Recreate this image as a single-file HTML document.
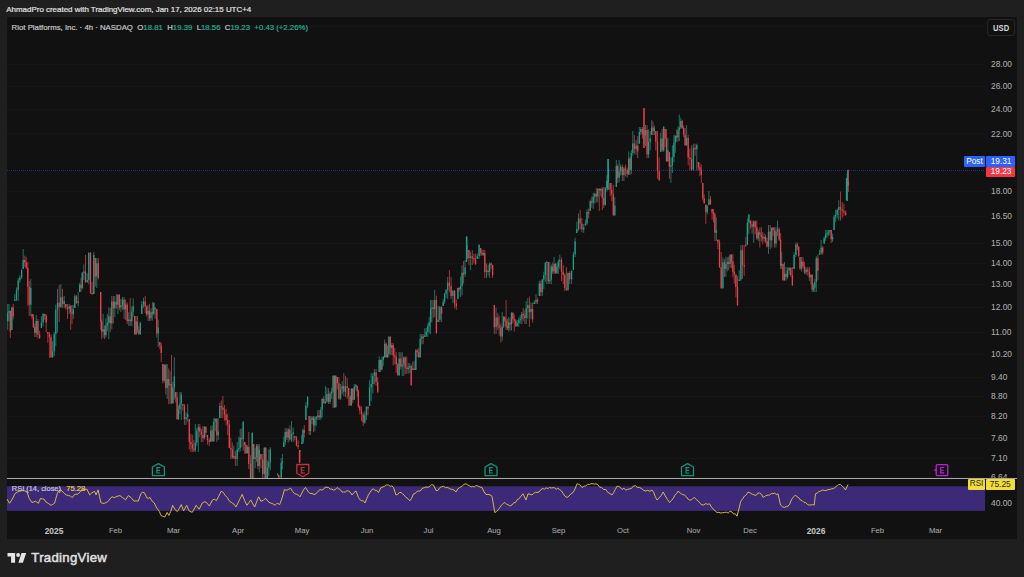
<!DOCTYPE html>
<html><head><meta charset="utf-8"><style>
*{margin:0;padding:0;box-sizing:border-box}
#top,#legend,#rsil{-webkit-text-stroke:0.2px currentColor}
.pl,.tl{-webkit-text-stroke:0.05px currentColor}
html,body{width:1024px;height:577px;overflow:hidden;background:#1f1f1f;font-family:"Liberation Sans",sans-serif}
#top{position:absolute;left:6.3px;top:5.3px;font-size:7.95px;color:#e2e2e2;white-space:nowrap;letter-spacing:0px}
#chart{position:absolute;left:7px;top:17px;width:1010px;height:522px;background:#111111}
svg{position:absolute;left:0;top:0}
#legend{position:absolute;left:11.6px;top:22.5px;font-size:7.8px;color:#c8c8c8;white-space:nowrap}
#legend .v{color:#22ab94}
.pl{position:absolute;left:991px;width:30px;text-align:left;font-size:8.4px;color:#adadad;line-height:12px}
.tl{position:absolute;top:525.3px;width:60px;text-align:center;font-size:7.7px;color:#acacac;line-height:12px}
.tl.b{font-weight:bold;color:#c4c4c4;font-size:8.4px}
.tag{position:absolute;height:10.5px;font-size:8.3px;line-height:10.5px;color:#fff;text-align:center;border-radius:1px}
#usd{position:absolute;left:987.3px;top:19.4px;width:27.7px;height:16.4px;border:1px solid #262626;border-radius:3px;font-size:7.6px;font-weight:bold;color:#d8d8d8;text-align:center;line-height:14.5px}
#usd span{display:inline-block;transform:scaleY(1.12);position:relative;top:1.3px}
#logo{position:absolute;left:31.3px;top:549.7px;font-size:13.2px;font-weight:normal;-webkit-text-stroke:0.55px #dedede;color:#dedede;letter-spacing:0.3px}
#rsil{position:absolute;left:11.8px;top:484px;font-size:7.45px;color:#c8c8d0;white-space:nowrap}
#rsil span{color:#e6d044;font-size:7.7px;margin-left:1px}
</style></head><body>
<div id="top">AhmadPro created with TradingView.com, Jan 17, 2026 02:15 UTC+4</div>
<div id="chart"></div>
<svg width="1024" height="577" viewBox="0 0 1024 577">
<path d="M7 26.5H985" stroke="#161616" stroke-width="1"/><path d="M7 64.5H985" stroke="#161616" stroke-width="1"/><path d="M7 86.5H985" stroke="#161616" stroke-width="1"/><path d="M7 109.5H985" stroke="#161616" stroke-width="1"/><path d="M7 133.5H985" stroke="#161616" stroke-width="1"/><path d="M7 191.5H985" stroke="#161616" stroke-width="1"/><path d="M7 216.5H985" stroke="#161616" stroke-width="1"/><path d="M7 243.5H985" stroke="#161616" stroke-width="1"/><path d="M7 263.5H985" stroke="#161616" stroke-width="1"/><path d="M7 284.5H985" stroke="#161616" stroke-width="1"/><path d="M7 307.5H985" stroke="#161616" stroke-width="1"/><path d="M7 332.5H985" stroke="#161616" stroke-width="1"/><path d="M7 354.5H985" stroke="#161616" stroke-width="1"/><path d="M7 377.5H985" stroke="#161616" stroke-width="1"/><path d="M7 396.5H985" stroke="#161616" stroke-width="1"/><path d="M7 416.5H985" stroke="#161616" stroke-width="1"/><path d="M7 438.5H985" stroke="#161616" stroke-width="1"/><path d="M7 458.5H985" stroke="#161616" stroke-width="1"/><path d="M7 477.5H985" stroke="#161616" stroke-width="1"/>
<rect x="7" y="486.3" width="978" height="24.6" fill="#3c2a78"/>
<path d="M7 170.5H985" stroke="#1f3378" stroke-width="1" stroke-dasharray="1 1"/>
<g stroke-width="1.3" fill="none"><path d="M7.7 304.0V329.9M9.0 304.0V321.3" stroke="#1f9e88" stroke-width="0.7"/><path d="M7.7 312.6V321.0M9.0 311.1V312.6" stroke="#1f9e88"/><path d="M10.3 310.6V338.0" stroke="#e8404c" stroke-width="0.7"/><path d="M10.3 311.1V331.4" stroke="#e8404c"/><path d="M11.8 306.7V330.0" stroke="#1f9e88" stroke-width="0.7"/><path d="M11.8 307.6V330.0" stroke="#1f9e88"/><path d="M13.2 304.0V319.3" stroke="#e8404c" stroke-width="0.7"/><path d="M13.2 307.6V316.3" stroke="#e8404c"/><path d="M14.8 293.8V301.0M16.5 287.5V301.0M18.2 278.0V301.0M19.9 275.2V283.0M21.6 269.0V278.8M23.2 249.0V269.0" stroke="#1f9e88" stroke-width="0.7"/><path d="M14.8 299.5V301.0M16.5 290.2V299.5M18.2 280.5V290.2M19.9 277.6V280.5M21.6 270.0V277.6M23.2 260.0V269.0" stroke="#1f9e88"/><path d="M24.8 255.6V266.8M26.2 256.8V269.0M27.8 262.0V305.9M29.2 280.8V316.0" stroke="#e8404c" stroke-width="0.7"/><path d="M24.8 260.0V262.4M26.2 262.4V268.0M27.8 268.0V287.0M29.2 287.0V304.8" stroke="#e8404c"/><path d="M30.8 278.8V316.0" stroke="#1f9e88" stroke-width="0.7"/><path d="M30.8 287.9V304.8" stroke="#1f9e88"/><path d="M32.1 314.0V319.4M33.4 314.0V328.0M34.8 323.8V337.0" stroke="#e8404c" stroke-width="0.7"/><path d="M32.1 314.0V316.9M33.4 316.9V327.0M34.8 327.0V332.9" stroke="#e8404c"/><path d="M36.2 315.0V337.0" stroke="#1f9e88" stroke-width="0.7"/><path d="M36.2 321.1V332.9" stroke="#1f9e88"/><path d="M37.9 319.0V338.5M39.6 330.6V339.0" stroke="#e8404c" stroke-width="0.7"/><path d="M37.9 321.1V334.7M39.6 334.7V337.8" stroke="#e8404c"/><path d="M41.4 316.4V328.0M43.1 313.0V326.4" stroke="#1f9e88" stroke-width="0.7"/><path d="M41.4 322.4V328.0M43.1 314.0V322.4" stroke="#1f9e88"/><path d="M44.8 314.0V319.9M46.2 314.2V332.0M47.8 332.0V342.8M49.4 332.0V358.0M51.0 334.5V358.0" stroke="#e8404c" stroke-width="0.7"/><path d="M44.8 314.0V315.8M46.2 315.8V322.6M47.8 332.0V333.7M49.4 333.7V337.3M51.0 337.3V357.0" stroke="#e8404c"/><path d="M52.6 341.2V358.0M54.2 332.0V356.2M55.8 304.7V346.0M57.5 288.9V332.7" stroke="#1f9e88" stroke-width="0.7"/><path d="M52.6 351.2V357.0M54.2 334.1V351.2M55.8 309.4V334.1M57.5 302.7V309.4" stroke="#1f9e88"/><path d="M59.2 285.0V322.0" stroke="#e8404c" stroke-width="0.7"/><path d="M59.2 302.7V307.0" stroke="#e8404c"/><path d="M60.8 284.0V308.0" stroke="#1f9e88" stroke-width="0.7"/><path d="M60.8 297.2V307.0" stroke="#1f9e88"/><path d="M62.5 288.8V308.0" stroke="#e8404c" stroke-width="0.7"/><path d="M62.5 297.2V304.0" stroke="#e8404c"/><path d="M64.2 295.8V308.0" stroke="#1f9e88" stroke-width="0.7"/><path d="M64.2 301.0V304.0" stroke="#1f9e88"/><path d="M65.8 304.0V309.8M67.5 304.0V319.0" stroke="#e8404c" stroke-width="0.7"/><path d="M65.8 304.0V307.2M67.5 307.2V308.7" stroke="#e8404c"/><path d="M69.2 304.0V313.9" stroke="#1f9e88" stroke-width="0.7"/><path d="M69.2 306.2V308.7" stroke="#1f9e88"/><path d="M70.7 305.0V330.0M72.0 305.0V324.1" stroke="#e8404c" stroke-width="0.7"/><path d="M70.7 306.2V312.6M72.0 312.6V314.1" stroke="#e8404c"/><path d="M73.3 305.0V318.7M74.8 294.1V308.0" stroke="#1f9e88" stroke-width="0.7"/><path d="M73.3 309.3V314.1M74.8 296.3V308.0" stroke="#1f9e88"/><path d="M76.5 295.1V304.0" stroke="#e8404c" stroke-width="0.7"/><path d="M76.5 296.3V302.8" stroke="#e8404c"/><path d="M78.2 292.0V306.5M79.7 282.8V292.0" stroke="#1f9e88" stroke-width="0.7"/><path d="M78.2 301.3V302.8M79.7 284.7V292.0" stroke="#1f9e88"/><path d="M81.0 277.8V292.0" stroke="#e8404c" stroke-width="0.7"/><path d="M81.0 284.7V288.0" stroke="#e8404c"/><path d="M82.3 272.0V289.4M83.8 264.4V280.1" stroke="#1f9e88" stroke-width="0.7"/><path d="M82.3 273.0V288.0M83.8 271.5V273.0" stroke="#1f9e88"/><path d="M85.5 255.0V283.0" stroke="#e8404c" stroke-width="0.7"/><path d="M85.5 271.5V282.0" stroke="#e8404c"/><path d="M87.2 273.2V283.0M88.8 252.0V284.3" stroke="#1f9e88" stroke-width="0.7"/><path d="M87.2 280.0V282.0M88.8 253.0V280.0" stroke="#1f9e88"/><path d="M90.5 252.0V294.0M92.1 282.0V294.0" stroke="#e8404c" stroke-width="0.7"/><path d="M90.5 253.0V293.0M92.1 293.0V294.5" stroke="#e8404c"/><path d="M93.8 252.0V294.0" stroke="#1f9e88" stroke-width="0.7"/><path d="M93.8 254.9V294.0" stroke="#1f9e88"/><path d="M95.3 258.0V286.5" stroke="#e8404c" stroke-width="0.7"/><path d="M95.3 258.0V276.4" stroke="#e8404c"/><path d="M96.8 258.0V288.0" stroke="#1f9e88" stroke-width="0.7"/><path d="M96.8 263.3V276.4" stroke="#1f9e88"/><path d="M98.3 258.0V279.4M100.7 292.0V330.0M101.7 319.5V339.0" stroke="#e8404c" stroke-width="0.7"/><path d="M98.3 263.3V278.3M100.7 292.0V321.2M101.7 321.2V331.7" stroke="#e8404c"/><path d="M103.1 314.0V337.7" stroke="#1f9e88" stroke-width="0.7"/><path d="M103.1 329.3V331.7" stroke="#1f9e88"/><path d="M104.5 325.3V339.0" stroke="#e8404c" stroke-width="0.7"/><path d="M104.5 329.3V335.3" stroke="#e8404c"/><path d="M105.9 318.3V337.5M107.3 314.0V331.1M108.8 307.4V339.0" stroke="#1f9e88" stroke-width="0.7"/><path d="M105.9 325.6V335.3M107.3 322.7V325.6M108.8 316.3V322.7" stroke="#1f9e88"/><path d="M110.3 307.7V331.8" stroke="#e8404c" stroke-width="0.7"/><path d="M110.3 316.3V323.2" stroke="#e8404c"/><path d="M111.8 296.0V329.3" stroke="#1f9e88" stroke-width="0.7"/><path d="M111.8 301.6V323.2" stroke="#1f9e88"/><path d="M113.3 296.0V323.8" stroke="#e8404c" stroke-width="0.7"/><path d="M113.3 301.6V308.2" stroke="#e8404c"/><path d="M114.8 296.0V317.0" stroke="#1f9e88" stroke-width="0.7"/><path d="M114.8 301.7V308.2" stroke="#1f9e88"/><path d="M116.4 294.0V308.9" stroke="#e8404c" stroke-width="0.7"/><path d="M116.4 301.7V304.8" stroke="#e8404c"/><path d="M117.9 294.0V314.0" stroke="#1f9e88" stroke-width="0.7"/><path d="M117.9 295.0V304.8" stroke="#1f9e88"/><path d="M119.4 294.0V310.1" stroke="#e8404c" stroke-width="0.7"/><path d="M119.4 295.0V307.5" stroke="#e8404c"/><path d="M120.9 298.9V311.9M122.5 297.0V309.9" stroke="#1f9e88" stroke-width="0.7"/><path d="M120.9 305.2V307.5M122.5 299.4V305.2" stroke="#1f9e88"/><path d="M124.1 297.0V319.1" stroke="#e8404c" stroke-width="0.7"/><path d="M124.1 299.4V309.4" stroke="#e8404c"/><path d="M125.6 299.5V319.9" stroke="#1f9e88" stroke-width="0.7"/><path d="M125.6 304.6V309.4" stroke="#1f9e88"/><path d="M127.2 302.5V324.0" stroke="#e8404c" stroke-width="0.7"/><path d="M127.2 304.6V321.0" stroke="#e8404c"/><path d="M128.8 312.3V326.0" stroke="#1f9e88" stroke-width="0.7"/><path d="M128.8 319.4V321.0" stroke="#1f9e88"/><path d="M130.2 298.0V326.0" stroke="#e8404c" stroke-width="0.7"/><path d="M130.2 319.4V321.2" stroke="#e8404c"/><path d="M131.8 306.6V326.0M133.2 298.3V316.6" stroke="#1f9e88" stroke-width="0.7"/><path d="M131.8 311.6V321.2M133.2 305.9V311.6" stroke="#1f9e88"/><path d="M134.7 316.0V335.0" stroke="#e8404c" stroke-width="0.7"/><path d="M134.7 316.0V334.0" stroke="#e8404c"/><path d="M136.1 316.0V335.0" stroke="#1f9e88" stroke-width="0.7"/><path d="M136.1 321.6V334.0" stroke="#1f9e88"/><path d="M137.5 316.0V333.2M138.9 326.4V335.0" stroke="#e8404c" stroke-width="0.7"/><path d="M137.5 321.6V329.5M138.9 329.5V334.0" stroke="#e8404c"/><path d="M140.3 321.6V335.0M141.8 301.0V314.0M143.5 297.7V307.9" stroke="#1f9e88" stroke-width="0.7"/><path d="M140.3 323.1V334.0M141.8 304.4V314.0M143.5 301.5V304.4" stroke="#1f9e88"/><path d="M145.2 296.0V313.2M146.7 305.2V316.5" stroke="#e8404c" stroke-width="0.7"/><path d="M145.2 301.5V306.6M146.7 306.6V314.4" stroke="#e8404c"/><path d="M148.1 305.3V321.0" stroke="#1f9e88" stroke-width="0.7"/><path d="M148.1 311.0V314.4" stroke="#1f9e88"/><path d="M149.5 303.9V321.0" stroke="#e8404c" stroke-width="0.7"/><path d="M149.5 311.0V318.3" stroke="#e8404c"/><path d="M151.0 308.4V320.8" stroke="#1f9e88" stroke-width="0.7"/><path d="M151.0 312.2V318.3" stroke="#1f9e88"/><path d="M152.4 302.0V320.6" stroke="#e8404c" stroke-width="0.7"/><path d="M152.4 312.2V313.8" stroke="#e8404c"/><path d="M153.8 302.3V315.7M155.2 309.0V318.9" stroke="#1f9e88" stroke-width="0.7"/><path d="M153.8 303.0V313.8M155.2 307.5V309.0" stroke="#1f9e88"/><path d="M156.8 309.0V337.6" stroke="#e8404c" stroke-width="0.7"/><path d="M156.8 309.0V333.5" stroke="#e8404c"/><path d="M158.2 319.6V347.0" stroke="#1f9e88" stroke-width="0.7"/><path d="M158.2 327.6V333.5" stroke="#1f9e88"/><path d="M159.8 342.0V349.3M161.2 342.9V362.0M162.8 364.0V383.3" stroke="#e8404c" stroke-width="0.7"/><path d="M159.8 342.0V345.4M161.2 345.4V353.0M162.8 364.0V380.8" stroke="#e8404c"/><path d="M164.2 364.0V382.7" stroke="#1f9e88" stroke-width="0.7"/><path d="M164.2 365.0V380.8" stroke="#1f9e88"/><path d="M165.8 364.0V394.5" stroke="#e8404c" stroke-width="0.7"/><path d="M165.8 365.0V387.9" stroke="#e8404c"/><path d="M167.2 364.0V399.0" stroke="#1f9e88" stroke-width="0.7"/><path d="M167.2 379.1V387.9" stroke="#1f9e88"/><path d="M168.7 368.5V404.0" stroke="#e8404c" stroke-width="0.7"/><path d="M168.7 379.1V385.4" stroke="#e8404c"/><path d="M170.1 370.9V404.0" stroke="#1f9e88" stroke-width="0.7"/><path d="M170.1 383.9V385.4" stroke="#1f9e88"/><path d="M171.5 355.0V404.0" stroke="#e8404c" stroke-width="0.7"/><path d="M171.5 383.9V403.0" stroke="#e8404c"/><path d="M172.9 381.7V404.0M174.3 357.2V399.6" stroke="#1f9e88" stroke-width="0.7"/><path d="M172.9 387.8V403.0M174.3 376.2V387.8" stroke="#1f9e88"/><path d="M175.7 392.0V402.5M177.1 392.0V420.0" stroke="#e8404c" stroke-width="0.7"/><path d="M175.7 392.0V397.3M177.1 397.3V419.0" stroke="#e8404c"/><path d="M178.5 405.4V420.0M179.9 392.0V414.2M181.3 392.0V420.0" stroke="#1f9e88" stroke-width="0.7"/><path d="M178.5 409.3V419.0M179.9 403.4V409.3M181.3 394.4V403.4" stroke="#1f9e88"/><path d="M182.8 404.0V410.6M184.4 404.0V425.0" stroke="#e8404c" stroke-width="0.7"/><path d="M182.8 404.0V405.5M184.4 405.5V419.3" stroke="#e8404c"/><path d="M186.1 412.4V425.0M187.7 404.0V421.6" stroke="#1f9e88" stroke-width="0.7"/><path d="M186.1 417.3V419.3M187.7 414.0V417.3" stroke="#1f9e88"/><path d="M189.3 419.0V449.4M190.8 433.8V452.0M192.3 434.8V452.0M193.8 440.2V452.0" stroke="#e8404c" stroke-width="0.7"/><path d="M189.3 419.0V441.9M190.8 441.9V444.2M192.3 444.2V448.7M193.8 448.7V450.2" stroke="#e8404c"/><path d="M195.3 424.0V452.0M196.8 427.9V445.8M198.3 424.0V452.0" stroke="#1f9e88" stroke-width="0.7"/><path d="M195.3 442.8V450.2M196.8 430.7V442.8M198.3 427.2V430.7" stroke="#1f9e88"/><path d="M199.8 424.0V437.3M201.4 428.8V442.0M202.9 426.0V442.0" stroke="#e8404c" stroke-width="0.7"/><path d="M199.8 427.2V431.8M201.4 431.8V434.9M202.9 434.9V438.3" stroke="#e8404c"/><path d="M204.4 426.0V439.5" stroke="#1f9e88" stroke-width="0.7"/><path d="M204.4 427.0V438.3" stroke="#1f9e88"/><path d="M205.9 426.0V437.1M207.5 435.0V444.6M209.2 438.0V446.0" stroke="#e8404c" stroke-width="0.7"/><path d="M205.9 427.0V432.7M207.5 435.0V440.3M209.2 440.3V441.8" stroke="#e8404c"/><path d="M210.8 426.0V442.0" stroke="#1f9e88" stroke-width="0.7"/><path d="M210.8 430.5V441.8" stroke="#1f9e88"/><path d="M212.2 425.2V442.0" stroke="#e8404c" stroke-width="0.7"/><path d="M212.2 430.5V441.0" stroke="#e8404c"/><path d="M213.8 418.0V442.0M215.2 418.0V431.2" stroke="#1f9e88" stroke-width="0.7"/><path d="M213.8 421.7V441.0M215.2 419.1V421.7" stroke="#1f9e88"/><path d="M216.8 418.0V442.0" stroke="#e8404c" stroke-width="0.7"/><path d="M216.8 419.1V435.2" stroke="#e8404c"/><path d="M218.2 418.0V440.0M219.8 402.7V418.0" stroke="#1f9e88" stroke-width="0.7"/><path d="M218.2 431.5V435.2M219.8 405.9V418.0" stroke="#1f9e88"/><path d="M221.3 400.5V418.0M222.9 396.0V418.0M224.5 405.0V420.7M226.1 408.8V425.6M227.7 413.8V435.0M229.3 420.0V448.2M230.8 437.9V459.0M232.3 442.6V459.0" stroke="#e8404c" stroke-width="0.7"/><path d="M221.3 405.9V407.4M222.9 407.4V410.0M224.5 410.0V414.6M226.1 414.6V419.9M227.7 419.9V424.6M229.3 424.6V448.1M230.8 448.1V449.6M232.3 449.6V457.5" stroke="#e8404c"/><path d="M233.8 445.8V459.0" stroke="#1f9e88" stroke-width="0.7"/><path d="M233.8 456.0V457.5" stroke="#1f9e88"/><path d="M235.4 450.8V466.0" stroke="#e8404c" stroke-width="0.7"/><path d="M235.4 456.0V459.1" stroke="#e8404c"/><path d="M237.2 442.0V466.0M238.8 436.5V452.0M240.2 428.9V451.5" stroke="#1f9e88" stroke-width="0.7"/><path d="M237.2 449.4V459.1M238.8 447.9V449.4M240.2 437.8V447.9" stroke="#1f9e88"/><path d="M241.8 428.4V447.3" stroke="#e8404c" stroke-width="0.7"/><path d="M241.8 437.8V439.3" stroke="#e8404c"/><path d="M243.2 421.0V450.8" stroke="#1f9e88" stroke-width="0.7"/><path d="M243.2 422.0V439.3" stroke="#1f9e88"/><path d="M244.7 442.0V454.0M246.0 443.8V454.0" stroke="#e8404c" stroke-width="0.7"/><path d="M244.7 442.0V445.0M246.0 445.0V453.0" stroke="#e8404c"/><path d="M247.3 445.3V453.8" stroke="#1f9e88" stroke-width="0.7"/><path d="M247.3 447.1V453.0" stroke="#1f9e88"/><path d="M248.8 432.0V469.0M250.5 455.3V478.0" stroke="#e8404c" stroke-width="0.7"/><path d="M248.8 447.1V464.0M250.5 464.0V478.0" stroke="#e8404c"/><path d="M252.2 432.0V478.0" stroke="#1f9e88" stroke-width="0.7"/><path d="M252.2 433.0V478.0" stroke="#1f9e88"/><path d="M253.7 444.0V478.0" stroke="#e8404c" stroke-width="0.7"/><path d="M253.7 444.0V458.9" stroke="#e8404c"/><path d="M255.1 448.1V468.2M256.5 444.0V461.7" stroke="#1f9e88" stroke-width="0.7"/><path d="M255.1 457.4V458.9M256.5 445.8V457.4" stroke="#1f9e88"/><path d="M257.9 444.0V469.1" stroke="#e8404c" stroke-width="0.7"/><path d="M257.9 445.8V466.0" stroke="#e8404c"/><path d="M259.3 444.0V472.4" stroke="#1f9e88" stroke-width="0.7"/><path d="M259.3 449.4V466.0" stroke="#1f9e88"/><path d="M260.9 454.0V467.9M262.7 454.0V478.0" stroke="#e8404c" stroke-width="0.7"/><path d="M260.9 454.0V459.6M262.7 459.6V474.1" stroke="#e8404c"/><path d="M264.3 447.0V478.0" stroke="#1f9e88" stroke-width="0.7"/><path d="M264.3 448.0V474.1" stroke="#1f9e88"/><path d="M265.8 447.0V478.0" stroke="#e8404c" stroke-width="0.7"/><path d="M265.8 448.0V478.0" stroke="#e8404c"/><path d="M267.3 460.3V478.0M268.8 449.5V476.1M270.3 447.0V470.1M277.6 475.0V475.8" stroke="#1f9e88" stroke-width="0.7"/><path d="M267.3 467.6V478.0M268.8 461.7V467.6M270.3 449.3V461.7M277.6 473.5V475.0" stroke="#1f9e88"/><path d="M278.8 475.0V478.0" stroke="#e8404c" stroke-width="0.7"/><path d="M278.8 475.0V477.8" stroke="#e8404c"/><path d="M281.2 457.9V478.0M282.4 454.0V469.2M283.8 436.6V447.0M285.2 428.0V445.2" stroke="#1f9e88" stroke-width="0.7"/><path d="M281.2 462.7V477.8M282.4 461.2V462.7M283.8 442.0V447.0M285.2 432.0V442.0" stroke="#1f9e88"/><path d="M286.8 428.0V440.0" stroke="#e8404c" stroke-width="0.7"/><path d="M286.8 432.0V437.4" stroke="#e8404c"/><path d="M288.2 428.0V442.6" stroke="#1f9e88" stroke-width="0.7"/><path d="M288.2 429.6V437.4" stroke="#1f9e88"/><path d="M289.8 425.4V441.2" stroke="#e8404c" stroke-width="0.7"/><path d="M289.8 429.6V439.5" stroke="#e8404c"/><path d="M291.5 421.0V442.0M293.2 427.5V442.0" stroke="#1f9e88" stroke-width="0.7"/><path d="M291.5 434.1V439.5M293.2 432.6V434.1" stroke="#1f9e88"/><path d="M294.8 436.0V440.5M296.5 436.0V446.4M298.2 440.5V449.0M299.5 450.0V463.0M300.0 450.0V462.0" stroke="#e8404c" stroke-width="0.7"/><path d="M294.8 436.0V437.8M296.5 437.8V445.6M298.2 445.6V447.1M299.5 450.0V463.0M300.0 450.0V451.5" stroke="#e8404c"/><path d="M301.7 434.9V444.0M303.0 428.5V444.0" stroke="#1f9e88" stroke-width="0.7"/><path d="M301.7 442.5V444.0M303.0 429.9V442.5" stroke="#1f9e88"/><path d="M304.3 425.0V437.8" stroke="#e8404c" stroke-width="0.7"/><path d="M304.3 429.9V432.7" stroke="#e8404c"/><path d="M305.9 402.0V420.0M307.6 396.0V408.2" stroke="#1f9e88" stroke-width="0.7"/><path d="M305.9 405.6V420.0M307.6 397.0V405.6" stroke="#1f9e88"/><path d="M309.2 416.0V435.0" stroke="#e8404c" stroke-width="0.7"/><path d="M309.2 416.0V431.1" stroke="#e8404c"/><path d="M310.6 416.0V435.0M312.0 416.0V424.0" stroke="#1f9e88" stroke-width="0.7"/><path d="M310.6 419.9V431.1M312.0 417.5V419.9" stroke="#1f9e88"/><path d="M313.5 416.0V432.2" stroke="#e8404c" stroke-width="0.7"/><path d="M313.5 417.5V425.4" stroke="#e8404c"/><path d="M314.9 416.0V431.2M316.3 416.0V425.7M317.8 410.1V420.0" stroke="#1f9e88" stroke-width="0.7"/><path d="M314.9 418.7V425.4M316.3 417.0V418.7M317.8 415.5V417.0" stroke="#1f9e88"/><path d="M319.2 410.1V420.0" stroke="#e8404c" stroke-width="0.7"/><path d="M319.2 415.5V417.5" stroke="#e8404c"/><path d="M320.8 406.9V419.9M322.2 398.0V417.8" stroke="#1f9e88" stroke-width="0.7"/><path d="M320.8 409.7V417.5M322.2 399.0V409.7" stroke="#1f9e88"/><path d="M323.8 396.0V404.0" stroke="#e8404c" stroke-width="0.7"/><path d="M323.8 399.0V403.0" stroke="#e8404c"/><path d="M325.4 386.0V404.0M326.9 387.5V402.9" stroke="#1f9e88" stroke-width="0.7"/><path d="M325.4 401.5V403.0M326.9 394.1V401.5" stroke="#1f9e88"/><path d="M328.5 388.2V404.0" stroke="#e8404c" stroke-width="0.7"/><path d="M328.5 394.1V401.9" stroke="#e8404c"/><path d="M330.0 391.3V404.0M331.6 387.6V399.0M333.1 375.0V408.0" stroke="#1f9e88" stroke-width="0.7"/><path d="M330.0 393.6V401.9M331.6 391.7V393.6M333.1 376.0V391.7" stroke="#1f9e88"/><path d="M334.4 375.0V408.0" stroke="#e8404c" stroke-width="0.7"/><path d="M334.4 376.0V407.0" stroke="#e8404c"/><path d="M335.8 375.0V408.0" stroke="#1f9e88" stroke-width="0.7"/><path d="M335.8 376.0V407.0" stroke="#1f9e88"/><path d="M337.3 377.0V389.4M338.9 377.0V399.7" stroke="#e8404c" stroke-width="0.7"/><path d="M337.3 377.0V383.2M338.9 383.2V398.6" stroke="#e8404c"/><path d="M340.6 384.0V400.0M342.2 381.2V394.0" stroke="#1f9e88" stroke-width="0.7"/><path d="M340.6 389.2V398.6M342.2 386.0V389.2" stroke="#1f9e88"/><path d="M343.8 373.0V396.2" stroke="#e8404c" stroke-width="0.7"/><path d="M343.8 386.0V391.8" stroke="#e8404c"/><path d="M345.5 376.0V397.1" stroke="#1f9e88" stroke-width="0.7"/><path d="M345.5 386.3V391.8" stroke="#1f9e88"/><path d="M347.2 377.9V399.0M348.7 388.0V406.0M350.1 395.6V406.0" stroke="#e8404c" stroke-width="0.7"/><path d="M347.2 386.3V387.9M348.7 388.0V396.3M350.1 396.3V405.0" stroke="#e8404c"/><path d="M351.4 388.0V406.0" stroke="#1f9e88" stroke-width="0.7"/><path d="M351.4 389.0V405.0" stroke="#1f9e88"/><path d="M352.8 388.0V402.9" stroke="#e8404c" stroke-width="0.7"/><path d="M352.8 389.0V399.7" stroke="#e8404c"/><path d="M354.3 384.0V400.0M355.9 384.0V390.3" stroke="#1f9e88" stroke-width="0.7"/><path d="M354.3 386.7V399.7M355.9 385.0V386.7" stroke="#1f9e88"/><path d="M357.3 386.0V396.8M358.4 389.7V408.0M359.8 405.0V414.3M361.5 406.4V421.0M363.2 412.6V426.0" stroke="#e8404c" stroke-width="0.7"/><path d="M357.3 386.0V391.5M358.4 391.5V406.4M359.8 406.4V410.4M361.5 410.4V414.3M363.2 414.3V422.6" stroke="#e8404c"/><path d="M364.8 411.3V424.0M366.4 406.0V420.2" stroke="#1f9e88" stroke-width="0.7"/><path d="M364.8 415.2V422.6M366.4 407.0V415.2" stroke="#1f9e88"/><path d="M368.0 406.0V415.4" stroke="#e8404c" stroke-width="0.7"/><path d="M368.0 407.0V408.5" stroke="#e8404c"/><path d="M369.6 380.1V406.0M371.2 373.0V400.8M372.8 373.0V393.5M374.4 369.0V384.5" stroke="#1f9e88" stroke-width="0.7"/><path d="M369.6 387.6V406.0M371.2 383.9V387.6M372.8 375.8V383.9M374.4 372.6V375.8" stroke="#1f9e88"/><path d="M376.1 369.0V385.8M377.7 377.4V393.0" stroke="#e8404c" stroke-width="0.7"/><path d="M376.1 372.6V381.9M377.7 381.9V392.0" stroke="#e8404c"/><path d="M379.2 356.3V372.0" stroke="#1f9e88" stroke-width="0.7"/><path d="M379.2 359.9V372.0" stroke="#1f9e88"/><path d="M380.6 359.3V372.0" stroke="#e8404c" stroke-width="0.7"/><path d="M380.6 359.9V369.5" stroke="#e8404c"/><path d="M381.9 356.6V370.4M383.3 356.0V365.8M384.7 339.4V358.0" stroke="#1f9e88" stroke-width="0.7"/><path d="M381.9 359.9V369.5M383.3 357.0V359.9M384.7 343.7V357.0" stroke="#1f9e88"/><path d="M386.1 342.0V358.0" stroke="#e8404c" stroke-width="0.7"/><path d="M386.1 343.7V356.9" stroke="#e8404c"/><path d="M387.5 345.3V358.0M388.9 336.0V357.3" stroke="#1f9e88" stroke-width="0.7"/><path d="M387.5 353.9V356.9M388.9 337.0V353.9" stroke="#1f9e88"/><path d="M390.3 336.0V355.1" stroke="#e8404c" stroke-width="0.7"/><path d="M390.3 337.0V347.9" stroke="#e8404c"/><path d="M391.8 343.0V354.8" stroke="#1f9e88" stroke-width="0.7"/><path d="M391.8 344.9V347.9" stroke="#1f9e88"/><path d="M393.2 343.0V365.5M394.8 347.9V364.7M396.2 352.2V373.0M397.8 362.8V376.0" stroke="#e8404c" stroke-width="0.7"/><path d="M393.2 344.9V355.6M394.8 355.6V357.1M396.2 357.1V364.1M397.8 364.1V375.0" stroke="#e8404c"/><path d="M399.2 352.0V376.0" stroke="#1f9e88" stroke-width="0.7"/><path d="M399.2 358.4V375.0" stroke="#1f9e88"/><path d="M400.8 352.4V369.4" stroke="#e8404c" stroke-width="0.7"/><path d="M400.8 358.4V366.4" stroke="#e8404c"/><path d="M402.2 352.0V376.0M403.8 356.5V376.0" stroke="#1f9e88" stroke-width="0.7"/><path d="M402.2 364.5V366.4M403.8 357.5V364.5" stroke="#1f9e88"/><path d="M405.2 356.5V374.1M406.8 356.5V373.8" stroke="#e8404c" stroke-width="0.7"/><path d="M405.2 357.5V367.6M406.8 367.6V369.1" stroke="#e8404c"/><path d="M408.2 362.9V373.8M409.8 363.0V373.2" stroke="#1f9e88" stroke-width="0.7"/><path d="M408.2 367.6V369.1M409.8 365.9V367.6" stroke="#1f9e88"/><path d="M411.2 364.6V386.0" stroke="#e8404c" stroke-width="0.7"/><path d="M411.2 365.9V385.0" stroke="#e8404c"/><path d="M412.8 361.7V370.0" stroke="#1f9e88" stroke-width="0.7"/><path d="M412.8 368.5V370.0" stroke="#1f9e88"/><path d="M414.2 360.5V370.0" stroke="#e8404c" stroke-width="0.7"/><path d="M414.2 368.5V370.0" stroke="#e8404c"/><path d="M415.8 349.0V370.0" stroke="#1f9e88" stroke-width="0.7"/><path d="M415.8 350.4V370.0" stroke="#1f9e88"/><path d="M417.2 349.0V357.1M418.8 347.8V358.0" stroke="#e8404c" stroke-width="0.7"/><path d="M417.2 350.4V351.9M418.8 351.9V357.0" stroke="#e8404c"/><path d="M420.2 334.0V358.0M421.8 334.0V344.4" stroke="#1f9e88" stroke-width="0.7"/><path d="M420.2 338.8V357.0M421.8 336.5V338.8" stroke="#1f9e88"/><path d="M423.2 334.0V344.0" stroke="#e8404c" stroke-width="0.7"/><path d="M423.2 336.5V338.0" stroke="#e8404c"/><path d="M424.8 328.3V337.0M426.2 328.0V337.0M427.8 323.4V337.0M429.2 317.0V333.4M430.6 300.0V334.0M431.9 300.0V322.6" stroke="#1f9e88" stroke-width="0.7"/><path d="M424.8 335.5V337.0M426.2 331.8V335.5M427.8 326.3V331.8M429.2 321.9V326.3M430.6 309.1V321.9M431.9 307.6V309.1" stroke="#1f9e88"/><path d="M433.2 300.0V317.9" stroke="#e8404c" stroke-width="0.7"/><path d="M433.2 307.6V309.1" stroke="#e8404c"/><path d="M434.7 290.0V316.9" stroke="#1f9e88" stroke-width="0.7"/><path d="M434.7 300.1V309.1" stroke="#1f9e88"/><path d="M436.4 295.6V334.0" stroke="#e8404c" stroke-width="0.7"/><path d="M436.4 300.1V333.0" stroke="#e8404c"/><path d="M438.2 306.0V322.0M439.9 306.0V322.0" stroke="#1f9e88" stroke-width="0.7"/><path d="M438.2 319.8V322.0M439.9 307.0V319.8" stroke="#1f9e88"/><path d="M441.6 306.0V322.0" stroke="#e8404c" stroke-width="0.7"/><path d="M441.6 307.0V313.5" stroke="#e8404c"/><path d="M443.2 298.9V306.0M444.6 292.8V303.8M446.1 289.0V297.7M447.7 276.9V299.0" stroke="#1f9e88" stroke-width="0.7"/><path d="M443.2 301.4V306.0M444.6 293.7V301.4M446.1 290.0V293.7M447.7 282.4V290.0" stroke="#1f9e88"/><path d="M449.4 270.0V292.2M451.1 276.8V299.0" stroke="#e8404c" stroke-width="0.7"/><path d="M449.4 282.4V285.9M451.1 285.9V295.9" stroke="#e8404c"/><path d="M452.9 290.0V303.1" stroke="#1f9e88" stroke-width="0.7"/><path d="M452.9 291.0V295.9" stroke="#1f9e88"/><path d="M454.6 290.0V308.4M456.3 299.3V310.0" stroke="#e8404c" stroke-width="0.7"/><path d="M454.6 291.0V303.6M456.3 303.6V306.3" stroke="#e8404c"/><path d="M457.9 287.7V299.0" stroke="#1f9e88" stroke-width="0.7"/><path d="M457.9 288.0V299.0" stroke="#1f9e88"/><path d="M459.1 287.0V292.1" stroke="#e8404c" stroke-width="0.7"/><path d="M459.1 288.0V289.5" stroke="#e8404c"/><path d="M460.6 276.5V297.0M462.1 265.3V295.3" stroke="#1f9e88" stroke-width="0.7"/><path d="M460.6 286.0V289.5M462.1 272.8V286.0" stroke="#1f9e88"/><path d="M463.6 261.0V283.6" stroke="#e8404c" stroke-width="0.7"/><path d="M463.6 272.8V274.3" stroke="#e8404c"/><path d="M465.1 260.0V277.0M466.5 236.5V262.0M467.0 236.5V259.0" stroke="#1f9e88" stroke-width="0.7"/><path d="M465.1 267.4V274.3M466.5 236.5V262.0M467.0 245.2V259.0" stroke="#1f9e88"/><path d="M468.9 250.0V265.2" stroke="#e8404c" stroke-width="0.7"/><path d="M468.9 250.0V257.9" stroke="#e8404c"/><path d="M470.6 251.6V270.0" stroke="#1f9e88" stroke-width="0.7"/><path d="M470.6 256.4V257.9" stroke="#1f9e88"/><path d="M472.3 250.0V265.0M473.9 254.1V263.5M475.6 253.6V265.0" stroke="#e8404c" stroke-width="0.7"/><path d="M472.3 256.4V257.9M473.9 257.9V259.4M475.6 259.4V264.0" stroke="#e8404c"/><path d="M477.3 253.4V259.0M479.1 244.0V259.0" stroke="#1f9e88" stroke-width="0.7"/><path d="M477.3 256.3V259.0M479.1 245.0V256.3" stroke="#1f9e88"/><path d="M480.7 248.0V255.7M482.0 249.9V256.0" stroke="#e8404c" stroke-width="0.7"/><path d="M480.7 248.0V252.9M482.0 252.9V254.4" stroke="#e8404c"/><path d="M483.3 249.7V256.0" stroke="#1f9e88" stroke-width="0.7"/><path d="M483.3 252.9V254.4" stroke="#1f9e88"/><path d="M484.8 250.0V278.0" stroke="#e8404c" stroke-width="0.7"/><path d="M484.8 252.9V272.0" stroke="#e8404c"/><path d="M486.5 263.4V278.0" stroke="#1f9e88" stroke-width="0.7"/><path d="M486.5 270.5V272.0" stroke="#1f9e88"/><path d="M488.1 264.8V275.6" stroke="#e8404c" stroke-width="0.7"/><path d="M488.1 270.5V272.0" stroke="#e8404c"/><path d="M489.6 262.5V278.0" stroke="#1f9e88" stroke-width="0.7"/><path d="M489.6 263.5V272.0" stroke="#1f9e88"/><path d="M491.1 262.5V268.9M492.6 264.6V278.0M494.3 305.0V334.0" stroke="#e8404c" stroke-width="0.7"/><path d="M491.1 263.5V265.0M492.6 265.0V275.2M494.3 305.0V327.2" stroke="#e8404c"/><path d="M496.1 307.6V334.0" stroke="#1f9e88" stroke-width="0.7"/><path d="M496.1 317.6V327.2" stroke="#1f9e88"/><path d="M497.8 312.9V330.1M499.2 315.4V335.5M500.8 323.6V342.6" stroke="#e8404c" stroke-width="0.7"/><path d="M497.8 317.6V325.4M499.2 325.4V327.7M500.8 327.7V336.6" stroke="#e8404c"/><path d="M502.2 312.0V340.6M503.6 316.0V328.0" stroke="#1f9e88" stroke-width="0.7"/><path d="M502.2 326.5V336.6M503.6 317.2V326.5" stroke="#1f9e88"/><path d="M504.9 316.0V322.2M506.1 300.0V330.0M507.4 319.0V330.0" stroke="#e8404c" stroke-width="0.7"/><path d="M504.9 317.2V320.6M506.1 320.6V326.7M507.4 326.7V328.2" stroke="#e8404c"/><path d="M508.7 317.0V331.6" stroke="#1f9e88" stroke-width="0.7"/><path d="M508.7 322.5V328.2" stroke="#1f9e88"/><path d="M510.1 318.0V330.9" stroke="#e8404c" stroke-width="0.7"/><path d="M510.1 322.5V324.4" stroke="#e8404c"/><path d="M511.5 312.0V330.4" stroke="#1f9e88" stroke-width="0.7"/><path d="M511.5 313.0V324.4" stroke="#1f9e88"/><path d="M512.9 312.0V323.1M514.3 314.5V331.6M515.8 319.1V327.0" stroke="#e8404c" stroke-width="0.7"/><path d="M512.9 313.0V319.3M514.3 319.3V320.8M515.8 320.8V326.0" stroke="#e8404c"/><path d="M517.2 319.9V327.0M518.8 317.4V327.0M520.2 315.1V323.8M521.8 312.0V324.2" stroke="#1f9e88" stroke-width="0.7"/><path d="M517.2 322.9V326.0M518.8 320.3V322.9M520.2 318.8V320.3M521.8 313.8V318.8" stroke="#1f9e88"/><path d="M523.2 308.1V320.9M524.8 310.2V324.0" stroke="#e8404c" stroke-width="0.7"/><path d="M523.2 313.8V315.3M524.8 315.3V318.1" stroke="#e8404c"/><path d="M526.2 301.0V324.0M527.8 298.1V318.7" stroke="#1f9e88" stroke-width="0.7"/><path d="M526.2 308.1V318.1M527.8 305.3V308.1" stroke="#1f9e88"/><path d="M529.4 296.5V327.0" stroke="#e8404c" stroke-width="0.7"/><path d="M529.4 305.3V312.2" stroke="#e8404c"/><path d="M531.0 302.1V319.1" stroke="#1f9e88" stroke-width="0.7"/><path d="M531.0 309.0V312.2" stroke="#1f9e88"/><path d="M532.6 302.8V322.7" stroke="#e8404c" stroke-width="0.7"/><path d="M532.6 309.0V319.4" stroke="#e8404c"/><path d="M534.2 300.4V304.0M536.0 294.0V304.0" stroke="#1f9e88" stroke-width="0.7"/><path d="M534.2 302.5V304.0M536.0 299.7V302.5" stroke="#1f9e88"/><path d="M537.6 297.7V304.0" stroke="#e8404c" stroke-width="0.7"/><path d="M537.6 299.7V301.2" stroke="#e8404c"/><path d="M539.3 280.7V296.0" stroke="#1f9e88" stroke-width="0.7"/><path d="M539.3 283.4V296.0" stroke="#1f9e88"/><path d="M540.8 280.6V296.0" stroke="#e8404c" stroke-width="0.7"/><path d="M540.8 283.4V292.2" stroke="#e8404c"/><path d="M542.3 279.1V296.0M543.8 271.7V289.0M545.3 262.0V281.8M546.8 262.0V284.0" stroke="#1f9e88" stroke-width="0.7"/><path d="M542.3 279.5V292.2M543.8 275.3V279.5M545.3 263.0V275.3M546.8 261.5V263.0" stroke="#1f9e88"/><path d="M548.3 262.0V284.0" stroke="#e8404c" stroke-width="0.7"/><path d="M548.3 262.0V281.3" stroke="#e8404c"/><path d="M549.8 262.0V284.0M551.3 264.5V284.0" stroke="#1f9e88" stroke-width="0.7"/><path d="M549.8 279.8V281.3M551.3 266.8V279.8" stroke="#1f9e88"/><path d="M552.7 262.5V273.9" stroke="#e8404c" stroke-width="0.7"/><path d="M552.7 266.8V271.4" stroke="#e8404c"/><path d="M554.1 257.0V274.0" stroke="#1f9e88" stroke-width="0.7"/><path d="M554.1 264.1V271.4" stroke="#1f9e88"/><path d="M555.5 262.8V274.0" stroke="#e8404c" stroke-width="0.7"/><path d="M555.5 264.1V273.0" stroke="#e8404c"/><path d="M556.9 263.4V274.0M558.3 259.3V274.0M559.8 254.7V268.9" stroke="#1f9e88" stroke-width="0.7"/><path d="M556.9 266.7V273.0M558.3 261.4V266.7M559.8 259.9V261.4" stroke="#1f9e88"/><path d="M561.5 257.6V281.0M563.2 265.1V284.0M564.8 273.2V291.0M566.4 267.0V291.0" stroke="#e8404c" stroke-width="0.7"/><path d="M561.5 259.9V271.7M563.2 271.7V274.9M564.8 274.9V288.3M566.4 288.3V289.8" stroke="#e8404c"/><path d="M568.0 272.5V291.0" stroke="#1f9e88" stroke-width="0.7"/><path d="M568.0 273.1V289.8" stroke="#1f9e88"/><path d="M569.7 271.1V284.0" stroke="#e8404c" stroke-width="0.7"/><path d="M569.7 273.1V279.3" stroke="#e8404c"/><path d="M571.6 270.0V284.0M573.4 251.8V270.0M575.1 237.7V257.0M576.8 221.6V233.0M578.5 213.3V231.2" stroke="#1f9e88" stroke-width="0.7"/><path d="M571.6 271.0V279.3M573.4 254.6V270.0M575.1 241.2V254.6M576.8 229.1V233.0M578.5 218.5V229.1" stroke="#1f9e88"/><path d="M580.2 209.8V229.4M581.9 218.0V232.3" stroke="#e8404c" stroke-width="0.7"/><path d="M580.2 218.5V223.5M581.9 223.5V229.5" stroke="#e8404c"/><path d="M583.7 224.1V233.0M585.4 219.7V225.5M587.0 209.4V225.2" stroke="#1f9e88" stroke-width="0.7"/><path d="M583.7 227.4V229.5M585.4 223.5V225.5M587.0 212.0V223.5" stroke="#1f9e88"/><path d="M588.7 208.5V218.4" stroke="#e8404c" stroke-width="0.7"/><path d="M588.7 212.0V213.5" stroke="#e8404c"/><path d="M590.2 199.5V211.0" stroke="#1f9e88" stroke-width="0.7"/><path d="M590.2 201.3V211.0" stroke="#1f9e88"/><path d="M591.8 196.6V207.6" stroke="#e8404c" stroke-width="0.7"/><path d="M591.8 201.3V202.8" stroke="#e8404c"/><path d="M593.2 192.8V209.0M594.8 192.8V203.7" stroke="#1f9e88" stroke-width="0.7"/><path d="M593.2 197.1V202.8M594.8 193.8V197.1" stroke="#1f9e88"/><path d="M596.3 188.0V202.3" stroke="#e8404c" stroke-width="0.7"/><path d="M596.3 193.8V196.5" stroke="#e8404c"/><path d="M597.8 188.0V202.5" stroke="#1f9e88" stroke-width="0.7"/><path d="M597.8 189.0V196.5" stroke="#1f9e88"/><path d="M599.3 188.0V211.0" stroke="#e8404c" stroke-width="0.7"/><path d="M599.3 189.0V190.5" stroke="#e8404c"/><path d="M600.8 188.0V196.2" stroke="#1f9e88" stroke-width="0.7"/><path d="M600.8 189.0V190.5" stroke="#1f9e88"/><path d="M602.3 187.0V210.0M603.8 187.0V208.0" stroke="#e8404c" stroke-width="0.7"/><path d="M602.3 189.0V198.0M603.8 198.0V205.0" stroke="#e8404c"/><path d="M605.3 187.0V205.6M606.9 175.3V191.5M608.0 159.0V190.0M608.5 159.0V183.6" stroke="#1f9e88" stroke-width="0.7"/><path d="M605.3 188.0V205.0M606.9 180.7V188.0M608.0 159.0V190.0M608.5 168.2V180.7" stroke="#1f9e88"/><path d="M610.2 183.0V196.1M611.7 183.0V201.0M613.3 184.9V216.0" stroke="#e8404c" stroke-width="0.7"/><path d="M610.2 183.0V189.6M611.7 189.6V193.9M613.3 193.9V215.0" stroke="#e8404c"/><path d="M614.8 197.0V216.0M616.3 160.0V187.0" stroke="#1f9e88" stroke-width="0.7"/><path d="M614.8 205.5V215.0M616.3 165.9V187.0" stroke="#1f9e88"/><path d="M617.7 164.3V183.0" stroke="#e8404c" stroke-width="0.7"/><path d="M617.7 165.9V177.8" stroke="#e8404c"/><path d="M619.1 160.0V182.1M620.6 164.5V175.6" stroke="#1f9e88" stroke-width="0.7"/><path d="M619.1 171.2V177.8M620.6 166.7V171.2" stroke="#1f9e88"/><path d="M622.3 164.5V181.0" stroke="#e8404c" stroke-width="0.7"/><path d="M622.3 166.7V175.0" stroke="#e8404c"/><path d="M623.9 166.8V181.0" stroke="#1f9e88" stroke-width="0.7"/><path d="M623.9 168.4V175.0" stroke="#1f9e88"/><path d="M625.5 164.6V176.4M627.2 167.5V177.5" stroke="#e8404c" stroke-width="0.7"/><path d="M625.5 168.4V169.9M627.2 169.9V174.3" stroke="#e8404c"/><path d="M628.7 151.4V175.0" stroke="#1f9e88" stroke-width="0.7"/><path d="M628.7 158.5V174.3" stroke="#1f9e88"/><path d="M630.0 157.2V175.0" stroke="#e8404c" stroke-width="0.7"/><path d="M630.0 158.5V169.9" stroke="#e8404c"/><path d="M631.3 150.0V174.0M632.8 131.0V155.7" stroke="#1f9e88" stroke-width="0.7"/><path d="M631.3 152.9V169.9M632.8 143.4V152.9" stroke="#1f9e88"/><path d="M634.4 135.1V153.8" stroke="#e8404c" stroke-width="0.7"/><path d="M634.4 143.4V149.1" stroke="#e8404c"/><path d="M636.1 139.8V154.9" stroke="#1f9e88" stroke-width="0.7"/><path d="M636.1 145.5V149.1" stroke="#1f9e88"/><path d="M637.7 136.0V158.0" stroke="#e8404c" stroke-width="0.7"/><path d="M637.7 145.5V151.6" stroke="#e8404c"/><path d="M639.3 127.0V143.7M640.8 127.0V135.2" stroke="#1f9e88" stroke-width="0.7"/><path d="M639.3 132.0V143.7M640.8 129.0V132.0" stroke="#1f9e88"/><path d="M642.4 127.0V138.8M643.9 130.1V143.7M644.0 108.0V148.0" stroke="#e8404c" stroke-width="0.7"/><path d="M642.4 129.0V134.0M643.9 134.0V135.5M644.0 108.0V148.0" stroke="#e8404c"/><path d="M645.5 125.0V146.2" stroke="#1f9e88" stroke-width="0.7"/><path d="M645.5 130.1V135.5" stroke="#1f9e88"/><path d="M647.1 125.0V158.0" stroke="#e8404c" stroke-width="0.7"/><path d="M647.1 130.1V154.6" stroke="#e8404c"/><path d="M648.6 129.4V158.0M650.2 131.0V150.3M651.7 120.0V135.0" stroke="#1f9e88" stroke-width="0.7"/><path d="M648.6 141.8V154.6M650.2 138.6V141.8M651.7 127.6V135.0" stroke="#1f9e88"/><path d="M653.0 121.7V135.0" stroke="#e8404c" stroke-width="0.7"/><path d="M653.0 127.6V131.1" stroke="#e8404c"/><path d="M654.3 125.6V135.0" stroke="#1f9e88" stroke-width="0.7"/><path d="M654.3 128.4V131.1" stroke="#1f9e88"/><path d="M655.8 131.0V150.6M657.5 131.0V178.6M659.2 157.4V181.0" stroke="#e8404c" stroke-width="0.7"/><path d="M655.8 131.0V141.6M657.5 141.6V171.3M659.2 171.3V180.0" stroke="#e8404c"/><path d="M660.7 132.7V152.0" stroke="#1f9e88" stroke-width="0.7"/><path d="M660.7 138.5V152.0" stroke="#1f9e88"/><path d="M662.2 129.0V151.6" stroke="#e8404c" stroke-width="0.7"/><path d="M662.2 138.5V150.2" stroke="#e8404c"/><path d="M663.7 126.0V152.0" stroke="#1f9e88" stroke-width="0.7"/><path d="M663.7 127.0V150.2" stroke="#1f9e88"/><path d="M665.1 129.0V147.0M666.5 129.0V162.0" stroke="#e8404c" stroke-width="0.7"/><path d="M665.1 129.0V139.1M666.5 139.1V161.0" stroke="#e8404c"/><path d="M667.9 137.8V162.0" stroke="#1f9e88" stroke-width="0.7"/><path d="M667.9 150.3V161.0" stroke="#1f9e88"/><path d="M669.4 152.0V178.7" stroke="#e8404c" stroke-width="0.7"/><path d="M669.4 152.0V166.7" stroke="#e8404c"/><path d="M670.9 157.3V183.0M672.4 145.2V173.0M673.9 135.0V162.1M675.3 135.0V152.8" stroke="#1f9e88" stroke-width="0.7"/><path d="M670.9 165.2V166.7M672.4 157.1V165.2M673.9 142.9V157.1M675.3 136.0V142.9" stroke="#1f9e88"/><path d="M676.7 129.2V141.6" stroke="#e8404c" stroke-width="0.7"/><path d="M676.7 136.0V137.6" stroke="#e8404c"/><path d="M678.0 126.5V141.6M679.3 114.5V141.1M680.8 117.7V129.0" stroke="#1f9e88" stroke-width="0.7"/><path d="M678.0 130.5V137.6M679.3 127.5V130.5M680.8 120.9V127.5" stroke="#1f9e88"/><path d="M682.2 119.9V129.0M683.7 125.5V137.2M685.1 128.1V146.0" stroke="#e8404c" stroke-width="0.7"/><path d="M682.2 120.9V128.0M683.7 128.0V134.7M685.1 134.7V145.0" stroke="#e8404c"/><path d="M686.6 125.0V146.0" stroke="#1f9e88" stroke-width="0.7"/><path d="M686.6 137.9V145.0" stroke="#1f9e88"/><path d="M688.2 135.0V165.2M689.9 148.3V170.3M691.6 145.1V170.7" stroke="#e8404c" stroke-width="0.7"/><path d="M688.2 137.9V157.6M689.9 157.6V159.1M691.6 159.1V169.7" stroke="#e8404c"/><path d="M693.4 143.7V170.7" stroke="#1f9e88" stroke-width="0.7"/><path d="M693.4 147.7V169.7" stroke="#1f9e88"/><path d="M695.1 143.7V156.0" stroke="#e8404c" stroke-width="0.7"/><path d="M695.1 147.7V149.2" stroke="#e8404c"/><path d="M696.8 143.7V170.7" stroke="#1f9e88" stroke-width="0.7"/><path d="M696.8 144.9V149.2" stroke="#1f9e88"/><path d="M698.4 162.0V170.5M699.9 162.5V176.3M701.3 164.7V183.0M702.8 183.0V200.5M704.2 194.3V204.0M705.8 204.8V224.0" stroke="#e8404c" stroke-width="0.7"/><path d="M698.4 162.0V167.2M699.9 167.2V169.5M701.3 169.5V175.1M702.8 183.0V198.4M704.2 198.4V203.0M705.8 204.8V212.3" stroke="#e8404c"/><path d="M707.2 204.8V214.5M708.9 191.0V205.0" stroke="#1f9e88" stroke-width="0.7"/><path d="M707.2 205.8V212.3M708.9 199.3V205.0" stroke="#1f9e88"/><path d="M710.5 196.1V205.0M712.1 209.0V219.7M713.5 209.0V222.3M714.9 212.5V241.0" stroke="#e8404c" stroke-width="0.7"/><path d="M710.5 199.3V204.0M712.1 209.0V212.5M713.5 212.5V214.2M714.9 214.2V232.7" stroke="#e8404c"/><path d="M716.3 217.5V241.0" stroke="#1f9e88" stroke-width="0.7"/><path d="M716.3 230.3V232.7" stroke="#1f9e88"/><path d="M717.9 239.7V249.1M719.5 239.7V268.0M721.2 252.0V289.0" stroke="#e8404c" stroke-width="0.7"/><path d="M717.9 239.7V242.6M719.5 242.6V267.0M721.2 267.0V288.0" stroke="#e8404c"/><path d="M722.9 257.6V289.0" stroke="#1f9e88" stroke-width="0.7"/><path d="M722.9 262.3V288.0" stroke="#1f9e88"/><path d="M724.5 259.3V277.0" stroke="#e8404c" stroke-width="0.7"/><path d="M724.5 262.3V268.9" stroke="#e8404c"/><path d="M725.9 256.6V276.6M727.3 257.4V271.4" stroke="#1f9e88" stroke-width="0.7"/><path d="M725.9 263.9V268.9M727.3 262.3V263.9" stroke="#1f9e88"/><path d="M728.7 256.6V270.3" stroke="#e8404c" stroke-width="0.7"/><path d="M728.7 262.3V264.1" stroke="#e8404c"/><path d="M730.1 254.0V267.8" stroke="#1f9e88" stroke-width="0.7"/><path d="M730.1 255.0V264.1" stroke="#1f9e88"/><path d="M731.5 254.0V268.3M732.9 254.0V277.4M734.3 264.8V283.6M735.9 274.6V297.3M737.5 275.9V306.0" stroke="#e8404c" stroke-width="0.7"/><path d="M731.5 255.0V261.3M732.9 261.3V271.8M734.3 271.8V274.5M735.9 274.6V287.1M737.5 287.1V305.0" stroke="#e8404c"/><path d="M739.2 270.2V281.0M740.9 245.0V281.0" stroke="#1f9e88" stroke-width="0.7"/><path d="M739.2 279.5V281.0M740.9 250.2V279.5" stroke="#1f9e88"/><path d="M742.5 245.0V278.9M744.2 245.0V276.0M745.8 237.0V245.0" stroke="#e8404c" stroke-width="0.7"/><path d="M742.5 250.2V265.1M744.2 265.1V266.6M745.8 245.0V246.5" stroke="#e8404c"/><path d="M747.4 218.6V245.0M748.9 213.8V233.9" stroke="#1f9e88" stroke-width="0.7"/><path d="M747.4 222.8V245.0M748.9 214.8V222.8" stroke="#1f9e88"/><path d="M750.5 220.5V228.7M752.1 220.5V233.9" stroke="#e8404c" stroke-width="0.7"/><path d="M750.5 220.5V224.3M752.1 224.3V226.7" stroke="#e8404c"/><path d="M753.7 220.5V243.0" stroke="#1f9e88" stroke-width="0.7"/><path d="M753.7 221.5V226.7" stroke="#1f9e88"/><path d="M755.2 220.5V234.4M756.8 220.5V239.7" stroke="#e8404c" stroke-width="0.7"/><path d="M755.2 221.5V227.3M756.8 227.3V238.6" stroke="#e8404c"/><path d="M758.3 229.7V241.2" stroke="#1f9e88" stroke-width="0.7"/><path d="M758.3 232.3V238.6" stroke="#1f9e88"/><path d="M759.8 227.6V247.6M761.3 227.0V241.5M762.7 232.0V244.4" stroke="#e8404c" stroke-width="0.7"/><path d="M759.8 232.3V234.5M761.3 234.5V237.1M762.7 237.1V238.6" stroke="#e8404c"/><path d="M764.1 233.4V242.1" stroke="#1f9e88" stroke-width="0.7"/><path d="M764.1 237.0V238.6" stroke="#1f9e88"/><path d="M765.6 234.6V243.3M767.0 237.7V247.6" stroke="#e8404c" stroke-width="0.7"/><path d="M765.6 237.0V240.9M767.0 240.9V246.6" stroke="#e8404c"/><path d="M768.5 225.0V254.0" stroke="#1f9e88" stroke-width="0.7"/><path d="M768.5 231.6V246.6" stroke="#1f9e88"/><path d="M770.2 225.0V249.1" stroke="#e8404c" stroke-width="0.7"/><path d="M770.2 231.6V240.3" stroke="#e8404c"/><path d="M771.7 227.0V247.6" stroke="#1f9e88" stroke-width="0.7"/><path d="M771.7 228.0V240.3" stroke="#1f9e88"/><path d="M773.1 227.0V235.9M774.6 227.0V247.6" stroke="#e8404c" stroke-width="0.7"/><path d="M773.1 228.0V230.2M774.6 230.2V243.4" stroke="#e8404c"/><path d="M776.0 227.0V247.6M777.5 220.5V236.2" stroke="#1f9e88" stroke-width="0.7"/><path d="M776.0 231.6V243.4M777.5 229.2V231.6" stroke="#1f9e88"/><path d="M779.2 227.2V241.0M780.6 233.0V269.0" stroke="#e8404c" stroke-width="0.7"/><path d="M779.2 229.2V239.7M780.6 239.7V265.7" stroke="#e8404c"/><path d="M781.7 251.7V269.0" stroke="#1f9e88" stroke-width="0.7"/><path d="M781.7 264.1V265.7" stroke="#1f9e88"/><path d="M783.0 263.5V281.0" stroke="#e8404c" stroke-width="0.7"/><path d="M783.0 264.1V280.0" stroke="#e8404c"/><path d="M784.5 262.0V281.0" stroke="#1f9e88" stroke-width="0.7"/><path d="M784.5 273.9V280.0" stroke="#1f9e88"/><path d="M786.0 267.0V280.7" stroke="#e8404c" stroke-width="0.7"/><path d="M786.0 273.9V276.9" stroke="#e8404c"/><path d="M787.5 267.3V279.1M789.1 267.0V274.7" stroke="#1f9e88" stroke-width="0.7"/><path d="M787.5 270.7V276.9M789.1 268.0V270.7" stroke="#1f9e88"/><path d="M790.8 267.0V276.9M792.4 267.0V286.0" stroke="#e8404c" stroke-width="0.7"/><path d="M790.8 268.0V275.2M792.4 275.2V285.0" stroke="#e8404c"/><path d="M794.1 252.4V269.0M795.9 242.5V257.1" stroke="#1f9e88" stroke-width="0.7"/><path d="M794.1 254.9V269.0M795.9 244.5V254.9" stroke="#1f9e88"/><path d="M797.4 242.5V250.4M798.7 246.3V257.0M800.0 257.0V270.0" stroke="#e8404c" stroke-width="0.7"/><path d="M797.4 244.5V247.0M798.7 247.0V256.0M800.0 257.0V268.4" stroke="#e8404c"/><path d="M801.5 257.1V271.6" stroke="#1f9e88" stroke-width="0.7"/><path d="M801.5 261.6V268.4" stroke="#1f9e88"/><path d="M803.0 257.0V268.8M804.5 261.9V274.0" stroke="#e8404c" stroke-width="0.7"/><path d="M803.0 261.6V266.6M804.5 266.6V272.5" stroke="#e8404c"/><path d="M806.1 267.0V274.9" stroke="#1f9e88" stroke-width="0.7"/><path d="M806.1 269.4V272.5" stroke="#1f9e88"/><path d="M807.8 267.0V275.7M809.4 267.0V281.0" stroke="#e8404c" stroke-width="0.7"/><path d="M807.8 269.4V271.7M809.4 271.7V277.6" stroke="#e8404c"/><path d="M810.9 274.0V284.5" stroke="#1f9e88" stroke-width="0.7"/><path d="M810.9 275.0V277.6" stroke="#1f9e88"/><path d="M812.2 274.0V292.0" stroke="#e8404c" stroke-width="0.7"/><path d="M812.2 275.0V289.6" stroke="#e8404c"/><path d="M813.5 283.6V292.0M814.8 278.8V292.0M816.3 256.3V292.0" stroke="#1f9e88" stroke-width="0.7"/><path d="M813.5 287.7V289.6M814.8 281.9V287.7M816.3 258.3V281.9" stroke="#1f9e88"/><path d="M817.9 254.7V280.3" stroke="#e8404c" stroke-width="0.7"/><path d="M817.9 258.3V270.8" stroke="#e8404c"/><path d="M819.5 249.8V254.7M821.1 240.0V254.7" stroke="#1f9e88" stroke-width="0.7"/><path d="M819.5 253.2V254.7M821.1 247.5V253.2" stroke="#1f9e88"/><path d="M822.7 245.9V254.7" stroke="#e8404c" stroke-width="0.7"/><path d="M822.7 247.5V252.6" stroke="#e8404c"/><path d="M824.2 236.4V243.7M825.6 230.0V240.9M827.0 230.0V237.9M828.4 230.0V236.2M829.8 230.0V234.8" stroke="#1f9e88" stroke-width="0.7"/><path d="M824.2 238.1V243.7M825.6 234.8V238.1M827.0 233.3V234.8M828.4 231.4V233.3M829.8 229.9V231.4" stroke="#1f9e88"/><path d="M831.2 230.0V243.0" stroke="#e8404c" stroke-width="0.7"/><path d="M831.2 230.0V239.2" stroke="#e8404c"/><path d="M832.6 233.7V242.0M834.1 214.8V230.0M835.6 209.8V221.9M837.2 208.5V218.6M838.8 200.3V220.7" stroke="#1f9e88" stroke-width="0.7"/><path d="M832.6 237.1V239.2M834.1 216.7V230.0M835.6 215.0V216.7M837.2 210.1V215.0M838.8 206.9V210.1" stroke="#1f9e88"/><path d="M840.5 191.5V220.7M842.2 202.0V218.3M843.9 203.7V215.8M845.7 210.3V215.8" stroke="#e8404c" stroke-width="0.7"/><path d="M840.5 206.9V209.2M842.2 209.2V211.1M843.9 211.1V212.6M845.7 212.6V214.8" stroke="#e8404c"/><path d="M846.5 178.0V200.0M847.2 173.0V201.0M847.8 170.0V186.0" stroke="#1f9e88" stroke-width="0.7"/><path d="M846.5 178.0V200.0M847.2 181.5V201.0M847.8 170.0V186.0" stroke="#1f9e88"/><path d="M848.4 169.7V192.1" stroke="#e8404c" stroke-width="0.7"/><path d="M848.4 181.5V185.2" stroke="#e8404c"/></g>
<path d="M152.4 467V475.6H164.4V467L158.4 463.6Z" stroke="#17937d" stroke-width="1.3" fill="#111" stroke-linejoin="round"/><path d="M160.3 467.6H156.9V473.0H160.3M156.9 470.3H160.0" stroke="#17937d" stroke-width="1.15" fill="none"/><path d="M296.8 464.5H308.8V473.2L302.8 476.8L296.8 473.2Z" stroke="#c42f3d" stroke-width="1.3" fill="#111" stroke-linejoin="round"/><path d="M304.7 467.5H301.3V472.9H304.7M301.3 470.2H304.4" stroke="#c42f3d" stroke-width="1.15" fill="none"/><path d="M485.0 467V475.6H497.0V467L491.0 463.6Z" stroke="#17937d" stroke-width="1.3" fill="#111" stroke-linejoin="round"/><path d="M492.9 467.6H489.5V473.0H492.9M489.5 470.3H492.6" stroke="#17937d" stroke-width="1.15" fill="none"/><path d="M681.5 467V475.6H693.5V467L687.5 463.6Z" stroke="#17937d" stroke-width="1.3" fill="#111" stroke-linejoin="round"/><path d="M689.4 467.6H686.0V473.0H689.4M686.0 470.3H689.1" stroke="#17937d" stroke-width="1.15" fill="none"/><rect x="936.2" y="464.6" width="11.6" height="11" rx="1.2" stroke="#c01ed8" stroke-width="1.3" fill="#111"/><path d="M934.0 470.2H936.7" stroke="#c01ed8" stroke-width="1.3"/><path d="M944.1 467.5H940.7V472.9H944.1M940.7 470.2H943.8" stroke="#c01ed8" stroke-width="1.15" fill="none"/>
<path d="M7 478.5H1017" stroke="#a8a8a8" stroke-width="1"/>
<polyline points="7.0,499.1 9.5,503.3 12.3,499.1 15.1,493.5 17.2,492.1 19.4,491.4 21.5,490.7 24.3,490.7 27.1,492.1 29.2,498.4 32.0,502.6 33.8,501.8 35.5,501.2 38.4,503.3 40.5,498.4 42.2,498.9 44.0,499.1 46.1,502.1 48.2,503.3 51.0,505.4 52.8,504.3 54.5,503.3 57.3,493.5 58.7,490.7 60.9,489.9 63.0,492.1 65.1,494.2 66.8,495.1 68.6,495.6 70.3,495.9 72.1,497.7 74.9,494.2 77.7,494.2 80.5,491.4 82.3,490.3 84.1,489.2 86.9,489.2 89.7,494.9 91.8,492.8 94.6,491.4 96.0,494.9 98.1,489.9 99.5,496.3 100.9,502.6 102.7,503.3 104.5,503.3 107.3,501.9 109.0,500.4 110.8,497.7 112.5,496.8 114.3,497.7 117.1,496.3 119.9,495.6 122.7,497.7 125.5,499.8 128.4,495.6 131.2,497.7 134.0,501.2 136.1,500.8 138.2,501.2 141.0,493.5 142.8,492.2 144.5,492.8 146.7,497.7 148.3,498.3 150.0,497.5 152.1,501.1 154.2,502.8 156.2,507.0 159.4,511.6 161.0,515.5 162.5,516.3 164.8,517.0 167.2,512.4 168.8,515.5 170.7,511.5 172.7,505.3 175.0,509.5 177.3,511.6 179.3,508.4 181.2,504.6 183.6,510.8 186.7,505.3 189.0,510.8 192.2,512.4 194.1,509.1 196.1,505.3 199.2,509.2 202.3,503.0 204.3,501.8 206.2,502.2 209.4,506.0 212.5,499.9 214.4,499.2 216.4,500.7 218.8,496.1 221.1,491.3 223.1,492.3 225.0,495.2 227.3,497.6 229.7,501.4 231.8,502.7 233.9,504.1 236.0,507.0 238.1,502.7 240.1,498.5 242.2,494.4 244.6,500.6 246.9,505.3 248.9,502.6 250.8,499.9 252.8,503.8 254.7,507.0 256.6,501.9 258.6,496.8 261.0,501.4 263.3,500.2 265.6,498.3 268.8,502.2 270.8,503.1 272.9,503.8 275.0,505.3 277.3,503.0 279.7,504.6 282.0,498.2 284.4,489.7 286.5,490.3 288.5,489.4 290.6,488.2 292.6,491.4 294.5,493.6 296.3,494.2 298.2,495.1 300.0,496.8 301.8,493.2 303.7,489.6 305.5,487.4 307.8,491.1 310.0,493.6 312.0,493.4 314.0,494.5 316.0,493.8 318.0,491.4 320.0,489.5 321.7,490.1 323.4,489.5 325.1,487.2 326.8,487.3 328.5,487.5 330.2,489.2 331.8,489.1 333.5,490.0 335.2,489.8 337.0,487.5 338.7,488.8 340.3,489.6 342.0,492.0 343.6,492.0 345.2,492.1 346.9,490.7 348.5,491.0 350.2,492.1 352.0,495.0 354.0,492.6 356.0,491.0 358.5,497.5 360.1,499.9 361.8,500.8 363.4,500.8 365.0,503.0 366.7,498.9 368.3,495.1 370.0,492.5 371.8,489.7 373.5,488.8 375.2,490.7 376.8,490.5 378.5,492.5 381.0,487.5 382.9,487.0 384.8,486.1 386.6,484.9 388.5,485.0 390.2,486.3 391.8,485.9 393.5,487.5 396.0,495.0 397.7,494.5 399.3,492.5 401.0,492.5 402.7,494.0 404.3,495.2 406.0,497.5 407.9,498.6 409.8,500.8 411.6,498.3 413.5,493.8 415.2,493.5 416.8,491.5 418.5,491.0 420.4,490.8 422.2,488.4 424.1,487.8 426.0,487.0 427.9,487.3 429.8,486.3 431.6,484.6 433.5,485.0 436.0,490.5 437.9,490.5 439.8,487.7 441.6,486.8 443.5,486.2 445.6,487.7 447.7,487.5 449.8,488.8 451.8,489.4 453.9,490.0 456.0,492.0 457.9,488.8 459.8,487.5 461.8,486.4 463.9,484.4 466.0,483.8 467.7,485.1 469.3,485.6 471.0,487.0 472.7,486.4 474.3,487.0 476.0,485.5 478.0,486.1 480.0,487.0 482.0,487.5 484.0,491.8 486.0,494.5 488.0,494.4 490.0,494.9 492.0,496.2 494.8,512.5 496.4,511.7 498.1,509.9 499.8,507.5 501.4,505.3 503.1,503.5 504.8,502.5 506.6,504.3 508.5,505.0 510.2,506.0 512.0,505.0 513.7,502.7 515.3,502.7 517.0,500.0 519.0,498.8 521.0,496.1 523.0,493.8 526.0,500.0 528.0,493.8 530.0,494.2 532.0,495.0 533.7,493.3 535.3,492.3 537.0,492.5 539.0,492.0 541.0,489.5 542.7,488.5 544.4,489.2 546.1,487.8 547.8,488.6 549.5,487.5 551.2,488.0 552.8,487.7 554.5,487.8 556.2,489.3 557.8,488.2 559.5,489.5 561.4,490.9 563.2,493.6 565.1,496.3 567.0,497.5 569.0,496.1 571.0,493.7 573.0,492.5 575.0,489.0 577.0,483.8 578.7,484.3 580.3,485.2 582.0,487.5 583.9,486.2 585.8,485.9 587.6,484.3 589.5,484.5 591.1,483.6 592.8,483.8 594.4,484.1 596.0,483.8 597.8,484.6 599.5,487.0 601.6,487.5 603.7,489.5 605.8,489.5 607.8,492.4 609.9,493.5 612.0,495.0 613.7,492.5 615.3,489.4 617.0,486.2 618.7,486.5 620.3,487.4 622.0,489.5 623.9,488.3 625.8,490.0 627.6,489.4 629.5,488.8 631.4,488.5 633.2,486.2 635.3,485.6 637.4,487.4 639.5,487.5 641.6,488.6 643.7,490.3 645.8,491.0 647.8,490.3 649.9,491.4 652.0,490.0 653.7,492.4 655.3,496.8 657.0,500.0 659.1,497.9 661.2,495.5 663.2,492.0 665.3,496.0 667.4,499.4 669.5,502.5 671.2,500.8 673.0,498.8 674.8,495.3 676.5,493.7 678.2,491.0 680.3,493.2 682.4,494.5 684.5,495.0 686.2,496.5 687.8,499.0 689.5,500.0 691.2,500.0 692.8,498.5 694.5,497.5 696.4,499.6 698.2,501.0 700.1,503.3 702.0,505.0 703.9,504.9 705.8,503.5 707.6,504.4 709.5,503.8 711.4,507.0 713.2,509.0 715.1,510.8 717.0,512.5 718.9,512.3 720.8,513.0 722.6,512.7 724.5,512.5 726.4,512.2 728.2,513.0 730.1,511.2 732.0,512.0 733.7,514.0 735.3,513.8 737.0,516.2 738.9,509.0 740.8,501.2 742.6,498.9 744.5,496.0 746.4,494.7 748.2,492.0 750.3,493.0 752.4,494.3 754.5,495.0 756.2,495.3 757.8,493.1 759.5,493.0 761.4,494.2 763.2,497.5 765.6,495.8 768.0,495.0 769.7,495.0 771.3,493.5 773.0,493.8 774.7,493.0 776.3,494.6 778.0,493.8 780.5,505.0 782.4,506.6 784.2,507.5 786.1,506.7 788.0,506.2 789.7,504.2 791.3,500.0 793.0,497.5 795.5,495.0 797.2,497.0 798.8,497.7 800.5,500.0 802.2,500.7 803.8,502.3 805.5,502.5 807.2,504.2 808.8,505.0 810.5,505.0 812.4,504.7 814.2,505.0 815.5,493.8 817.2,493.1 818.8,491.7 820.5,491.2 822.4,490.0 824.2,490.4 826.1,490.7 828.0,489.5 829.9,489.6 831.8,488.7 833.6,488.6 835.5,487.0 837.2,485.7 838.8,484.6 840.5,484.5 842.2,486.2 843.8,487.7 845.5,490.0 848.0,484.5" fill="none" stroke="#dcc03e" stroke-width="0.95"/>
</svg>
<div id="legend">Riot Platforms, Inc. · 4h · NASDAQ&nbsp; O<span class="v">18.81</span>&nbsp; H<span class="v">19.39</span>&nbsp; L<span class="v">18.56</span>&nbsp; C<span class="v">19.23</span>&nbsp; <span class="v">+0.43 (+2.26%)</span></div>
<div id="usd"><span>USD</span></div>
<div class="pl" style="top:58.4px">28.00</div><div class="pl" style="top:79.6px">26.00</div><div class="pl" style="top:102.6px">24.00</div><div class="pl" style="top:127.5px">22.00</div><div class="pl" style="top:185.0px">18.00</div><div class="pl" style="top:209.9px">16.50</div><div class="pl" style="top:237.2px">15.00</div><div class="pl" style="top:257.0px">14.00</div><div class="pl" style="top:278.2px">13.00</div><div class="pl" style="top:301.2px">12.00</div><div class="pl" style="top:326.1px">11.00</div><div class="pl" style="top:347.7px">10.20</div><div class="pl" style="top:371.1px">9.40</div><div class="pl" style="top:390.0px">8.80</div><div class="pl" style="top:410.2px">8.20</div><div class="pl" style="top:432.0px">7.60</div><div class="pl" style="top:451.5px">7.10</div><div class="pl" style="top:470.7px;height:7.3px;overflow:hidden">6.64</div>
<div class="tag" style="left:963.7px;top:156px;width:21.5px;background:#2962ff">Post</div>
<div class="tag" style="left:985.7px;top:156px;width:29.3px;padding-left:1.5px;background:#2962ff">19.31</div>
<div class="tag" style="left:985.7px;top:167.2px;width:29.3px;height:9.7px;line-height:9.7px;padding-left:1.5px;background:#f23645">19.23</div>
<div class="tag" style="left:968.3px;top:479.2px;width:16.5px;height:10.5px;line-height:10.5px;background:#f2dc3a;color:#2a2a1a;font-size:8.2px">RSI</div>
<div class="tag" style="left:985.5px;top:479.2px;width:29.5px;height:10.5px;line-height:10.5px;background:#f2dc3a;color:#2a2a1a;font-size:8.4px">75.25</div>
<div class="pl" style="top:497px">40.00</div>
<div id="rsil">RSI (14, close)&nbsp; <span>75.28</span></div>
<div class="tl b" style="left:24.0px">2025</div><div class="tl" style="left:85.5px">Feb</div><div class="tl" style="left:143.5px">Mar</div><div class="tl" style="left:208.0px">Apr</div><div class="tl" style="left:272.0px">May</div><div class="tl" style="left:337.0px">Jun</div><div class="tl" style="left:398.5px">Jul</div><div class="tl" style="left:464.0px">Aug</div><div class="tl" style="left:528.5px">Sep</div><div class="tl" style="left:593.0px">Oct</div><div class="tl" style="left:663.5px">Nov</div><div class="tl" style="left:720.0px">Dec</div><div class="tl b" style="left:786.0px">2026</div><div class="tl" style="left:847.5px">Feb</div><div class="tl" style="left:905.5px">Mar</div>
<svg width="1024" height="577" viewBox="0 0 1024 577" style="left:0;top:0">
<path d="M7.5 553H15.1V562.7H11.1V556.5H7.5Z" fill="#e4e4e4"/>
<circle cx="18.1" cy="555" r="1.95" fill="#e4e4e4"/>
<path d="M21.5 553H26.2L22.9 562.7H18.4Z" fill="#e4e4e4"/>
</svg>
<div id="logo">TradingView</div>
</body></html>
